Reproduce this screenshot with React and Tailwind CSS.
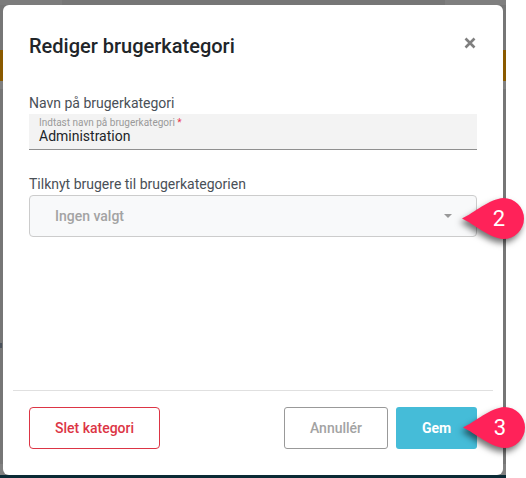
const font = { fontFamily: 'Roboto, sans-serif' };

function Callout({ n, className }) {
  return (
    <div className={`absolute w-[62px] h-[41px] ${className}`}>
      <svg width="62" height="41" viewBox="0 0 62 41" className="absolute inset-0 overflow-visible drop-shadow-[-2px_4px_3px_rgba(0,0,0,0.55)]">
        <path d="M0 20.5 C12 15 27 1 41.5 0 A20.5 20.5 0 0 1 41.5 41 C27 40 12 26 0 20.5Z" fill="#ff2259" />
      </svg>
      <span className="absolute left-[25px] w-[24px] top-0 h-[41px] flex items-center justify-center text-white text-[22px]">{n}</span>
    </div>
  );
}

export default function App() {
  return (
    <div className="relative w-[526px] h-[478px] overflow-hidden bg-white" style={font}>
      {/* dimmed page behind the dialog */}
      <div className="relative w-[506px] h-[478px] flex flex-col bg-[#767676]">
        <div className="h-[50px] flex items-start">
          <div className="w-[62px] h-[5px] bg-[#7c7c7c]" />
          <div className="flex-1" />
          <div className="w-[61px] h-[5px] bg-[#7f7f7f]" />
        </div>
        <div className="h-[31px] bg-[#8a5a00]" />
        <div className="h-[8px] bg-[#808080]" />
        <div className="flex-1" />
        <div className="h-[11px] bg-[#808080]" />
        <div className="h-[3px] bg-[#0a2a35]" />
        <div className="absolute left-0 top-[343px] w-[2px] h-[5px] bg-[#4a525c]" />
      </div>

      <div className="absolute left-[3px] top-[5px] w-[500px] h-[470px] bg-white rounded-[6px] flex flex-col">
        <div className="h-[82px] pl-[26px] pr-[27px] flex items-center justify-between">
          <h1 className="text-[20px] font-medium text-[#212529] leading-none">Rediger brugerkategori</h1>
          <svg width="12" height="12" viewBox="0 0 12 12" className="mb-[7px]">
            <path d="M1.5 1.5 L10.5 10.5 M10.5 1.5 L1.5 10.5" stroke="#7f7f7f" strokeWidth="2.6" />
          </svg>
        </div>

        <div className="px-[26px]">
          <div className="text-[14px] leading-[16px] text-[#495057] mt-[8px]">Navn på brugerkategori</div>
          <div className="mt-[3px] h-[36px] bg-[#f3f3f3] border-b border-[#8f8f8f] pl-[10px] pt-[3px]">
            <div className="text-[10px] leading-[12px] text-[#9a9a9a]">
              Indtast navn på brugerkategori <span className="text-[#e8384f]">*</span>
            </div>
            <div className="text-[14px] leading-[16px] text-[#212529] -mt-[1px]">Administration</div>
          </div>

          <div className="text-[14px] leading-[16px] text-[#495057] mt-[26px]">Tilknyt brugere til brugerkategorien</div>
          <div className="mt-[3px] h-[42px] bg-[#f8f9fa] border border-[#cccccc] rounded-[4px] pl-[25px] pr-[24px] flex items-center justify-between">
            <span className="text-[14px] font-medium text-[#a3a3a3]">Ingen valgt</span>
            <span className="w-0 h-0 mb-[1px] border-x-[4.5px] border-x-transparent border-t-[4.5px] border-t-[#999999]" />
          </div>
        </div>

        <div className="mt-auto mx-[10px] border-t border-[#e0e0e0] h-[85px] px-[16px] pt-[16px] flex gap-[8px]">
          <button className="w-[131px] h-[42px] border border-[#dc3545] rounded-[4px] text-[14px] font-medium text-[#dc3545] mr-auto">Slet kategori</button>
          <button className="w-[104px] h-[42px] border border-[#999999] rounded-[3px] text-[14px] font-medium text-[#a3a3a3]">Annullér</button>
          <button className="w-[81px] h-[42px] bg-[#45bcd8] rounded-[3px] text-[14px] font-bold text-white">Gem</button>
        </div>
      </div>

      <Callout n="2" className="left-[462px] top-[198px]" />
      <Callout n="3" className="left-[463px] top-[407px]" />
    </div>
  );
}
